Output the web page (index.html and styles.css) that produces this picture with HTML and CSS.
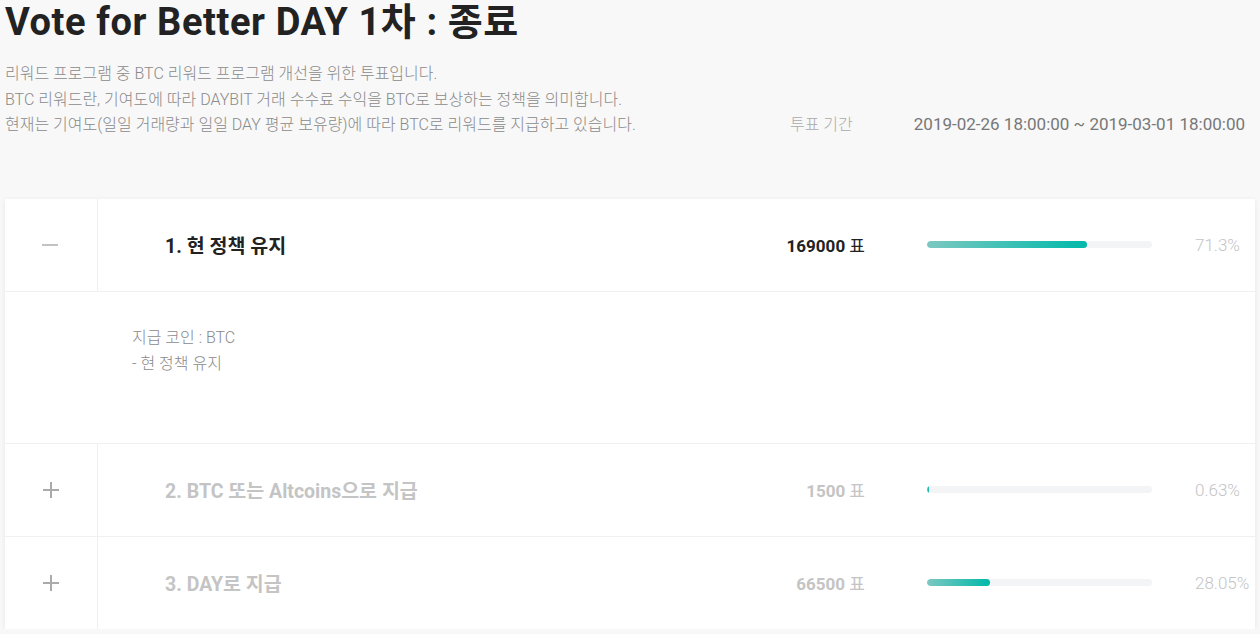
FILE: index.html
```html
<!DOCTYPE html>
<html lang="ko">
<head>
<meta charset="utf-8">
<title>Vote for Better DAY 1차</title>
<link rel="stylesheet" href="styles.css">
</head>
<body>
<main class="page">
  <h1 class="title">Vote for Better DAY 1차 : 종료</h1>
  <section class="intro">
    <div class="desc">
      <p>리워드 프로그램 중 BTC 리워드 프로그램 개선을 위한 투표입니다.</p>
      <p>BTC 리워드란, 기여도에 따라 DAYBIT 거래 수수료 수익을 BTC로 보상하는 정책을 의미합니다.</p>
      <p>현재는 기여도(일일 거래량과 일일 DAY 평균 보유량)에 따라 BTC로 리워드를 지급하고 있습니다.</p>
    </div>
    <div class="period">
      <span class="period-label">투표 기간</span>
      <span class="period-value">2019-02-26 18:00:00 ~ 2019-03-01 18:00:00</span>
    </div>
  </section>

  <section class="card">
    <div class="row active">
      <div class="toggle"><span class="icon minus"></span></div>
      <div class="opt-title">1. 현 정책 유지</div>
      <div class="votes"><b>169000</b> 표</div>
      <div class="bar"><div class="fill" style="width:71.3%"></div></div>
      <div class="pct">71.3%</div>
    </div>
    <div class="detail">
      <p>지급 코인 : BTC</p>
      <p>- 현 정책 유지</p>
    </div>
    <div class="row">
      <div class="toggle"><span class="icon plus"></span></div>
      <div class="opt-title">2. BTC 또는 Altcoins으로 지급</div>
      <div class="votes"><b>1500</b> 표</div>
      <div class="bar"><div class="fill" style="width:0.63%"></div></div>
      <div class="pct">0.63%</div>
    </div>
    <div class="row last">
      <div class="toggle"><span class="icon plus"></span></div>
      <div class="opt-title">3. DAY로 지급</div>
      <div class="votes"><b>66500</b> 표</div>
      <div class="bar"><div class="fill" style="width:28.05%"></div></div>
      <div class="pct">28.05%</div>
    </div>
  </section>
</main>
</body>
</html>
```
FILE: styles.css
```css
html, body {
  margin: 0;
  padding: 0;
  background: #f8f8f8;
}
body {
  font-family: Roboto, "Noto Sans CJK KR", sans-serif;
  color: #222;
}
.page {
  padding: 0 5px;
}
.title {
  margin: 0;
  font-size: 38px;
  line-height: 44px;
  font-weight: 700;
  letter-spacing: 0.6px;
  color: #222;
}
.intro {
  display: flex;
  justify-content: space-between;
  align-items: flex-end;
  margin-top: 17px;
}
.desc p {
  margin: 0;
  font-size: 16px;
  font-weight: 300;
  line-height: 25.5px;
  color: #8a8a8a;
}
.period {
  display: flex;
  align-items: center;
  padding-right: 10px;
  line-height: 25.5px;
}
.period-label {
  font-size: 16px;
  font-weight: 300;
  color: #aaa;
  margin-right: 61px;
}
.period-value {
  font-size: 17px;
  color: #777;
}
.card {
  margin-top: 61px;
  background: #fff;
  box-shadow: 0 1px 5px rgba(0, 0, 0, 0.07);
}
.row {
  display: flex;
  align-items: center;
  height: 92px;
  border-bottom: 1px solid #f0f0f0;
}
.row.last {
  border-bottom: none;
}
.toggle {
  width: 92px;
  height: 100%;
  flex: none;
  display: flex;
  align-items: center;
  justify-content: center;
  border-right: 1px solid #f0f0f0;
}
.icon {
  position: relative;
  width: 16px;
  height: 16px;
}
.icon::before,
.icon::after {
  content: "";
  position: absolute;
  background: #aaa;
}
.icon::before {
  left: 0;
  top: 7px;
  width: 16px;
  height: 2px;
}
.plus::after {
  left: 7px;
  top: 0;
  width: 2px;
  height: 16px;
}
.minus::before {
  background: #c2c2c2;
  left: -1px;
}
.minus::after {
  display: none;
}
.opt-title {
  flex: 1;
  padding-left: 67px;
  font-size: 19.5px;
  font-weight: 700;
  color: #c4c4c4;
}
.votes {
  font-size: 17px;
  color: #c4c4c4;
  text-align: right;
}
.votes b {
  font-weight: 700;
}
.active .opt-title,
.active .votes {
  color: #222;
}
.bar {
  width: 225px;
  height: 7px;
  margin-left: 62px;
  border-radius: 4px;
  background: #f3f4f6;
  overflow: hidden;
  flex: none;
}
.fill {
  height: 100%;
  min-width: 2px;
  border-radius: 4px;
  background: linear-gradient(to right, #7cc8c1, #00b9aa);
}
.pct {
  width: 60px;
  margin-left: 43px;
  flex: none;
  font-size: 17px;
  font-weight: 300;
  color: #c4c4c4;
}
.detail {
  padding: 33px 0 66px 127px;
  border-bottom: 1px solid #f0f0f0;
}
.detail p {
  margin: 0;
  font-size: 16px;
  font-weight: 300;
  line-height: 26px;
  color: #8a8a8a;
}
```
